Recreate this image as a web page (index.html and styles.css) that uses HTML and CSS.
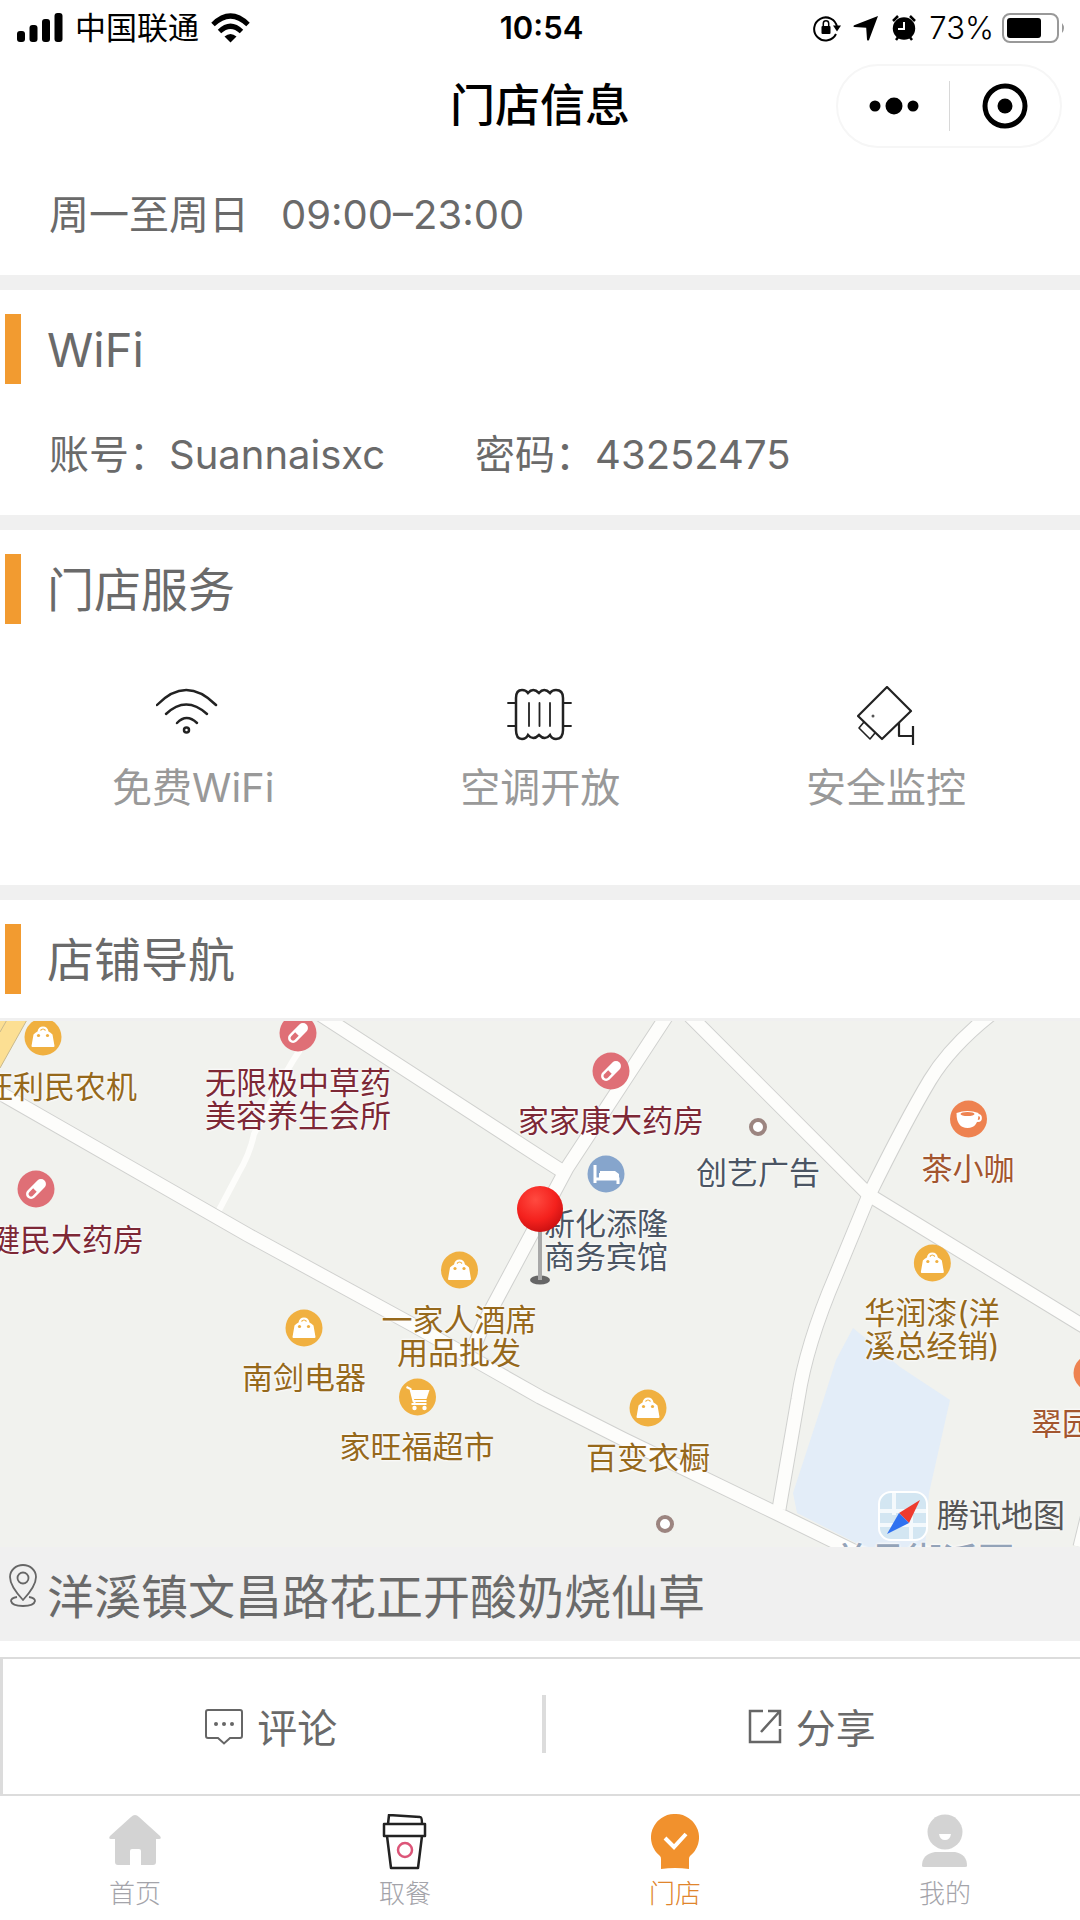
FILE: index.html
```
<!DOCTYPE html>
<html lang="zh-CN">
<head>
    <title>门店信息</title>
    <meta charset="UTF-8">
    <meta name="viewport" content="width=device-width, initial-scale=1.0">
    <link rel="stylesheet" href="styles.css">
</head>
<body>
    <!-- shared symbols -->
    <svg class="symbols" aria-hidden="true">
        <symbol id="bag" viewBox="0 0 38 38">
            <circle cx="19" cy="19" r="18.500" fill="#f0b040"/>
            <path d="M9.500 16.500q2-2 4-3 1-5 5.500-5t5.500 5q2 1 4 3l2 11.500q0 1-1 1h-21q-1 0-1-1z" fill="#fff"/>
            <circle cx="14.500" cy="17.500" r="1.600" fill="#f0b040"/>
            <circle cx="23.500" cy="17.500" r="1.600" fill="#f0b040"/>
            <path d="M16.500 12.500q2.500-3 5 0" fill="none" stroke="#f0b040" stroke-width="1.200"/>
        </symbol>
        <symbol id="pill" viewBox="0 0 38 38">
            <circle cx="19" cy="19" r="18.500" fill="#df6f76"/>
            <g transform="rotate(45 19 19)">
                <rect x="14" y="7" width="10" height="24" rx="5" fill="#fff"/>
                <path d="M16.500 20.500h5V26a2.500 2.500 0 0 1-5 0z" fill="#df6f76"/>
            </g>
        </symbol>
        <symbol id="cup" viewBox="0 0 38 38">
            <circle cx="19" cy="19" r="18.500" fill="#ee8250"/>
            <path d="M7 13q11-4 22 0 0 15-11 15T7 13z" fill="#fff"/>
            <circle cx="28.500" cy="18" r="3" fill="none" stroke="#fff" stroke-width="1.800"/>
            <ellipse cx="18" cy="14" rx="7" ry="2" fill="#ee8250"/>
        </symbol>
        <symbol id="bed" viewBox="0 0 38 38">
            <circle cx="19" cy="19" r="18.500" fill="#86a5cc"/>
            <path d="M8 10v18M8 24h23v5" fill="none" stroke="#fff" stroke-width="3"/>
            <path d="M12 18h1v-2h15l4 3v5H12z" fill="#fff"/>
        </symbol>
        <symbol id="cart" viewBox="0 0 38 38">
            <circle cx="19" cy="19" r="18.500" fill="#f0b040"/>
            <path d="M8 9l4 2 3 12h13M13 26h15M16 23v3" fill="none" stroke="#fff" stroke-width="2"/>
            <path d="M12 12h19l-3 9H15z" fill="#fff"/>
            <circle cx="16" cy="30" r="2.200" fill="#fff"/>
            <circle cx="26" cy="30" r="2.200" fill="#fff"/>
        </symbol>
    </svg>

    <div class="status-bar">
        <div class="status-left">
            <svg width="46" height="29" viewBox="0 0 46 29"><rect x="0" y="18" width="8" height="11" rx="3"/><rect x="12.500" y="12" width="8" height="17" rx="3"/><rect x="25" y="6" width="8" height="23" rx="3"/><rect x="37.500" y="0" width="8" height="29" rx="3"/></svg>
            <span>中国联通</span>
            <svg width="39" height="30" viewBox="0 0 39 30" fill="none" stroke="#000" stroke-width="5"><path d="M2 11.500Q19.500-5.500 37 11.500"/><path d="M8.500 18.500Q19.500 8 30.500 18.500"/><path d="M19.500 29.500l-6-6q6-5 12 0z" fill="#000" stroke="none"/></svg>
        </div>
        <div class="status-time">10:54</div>
        <div class="status-right">
            <svg width="28" height="28" viewBox="0 0 28 28"><path d="M23 20a11.500 11.500 0 1 1 1-7" fill="none" stroke="#000" stroke-width="2"/><path d="M20 11.500h8l-4 6z"/><rect x="8.500" y="12" width="9" height="8" rx="1"/><path d="M10.300 12V9.500a2.700 2.700 0 0 1 5.400 0V12" fill="none" stroke="#000" stroke-width="1.500"/></svg>
            <svg width="26" height="26" viewBox="0 0 26 26"><path d="M25 1L16 25q-1.500 1.500-2-.5l-.8-11.700L1.500 12q-2-.5-.3-1.800z"/></svg>
            <svg width="26" height="26" viewBox="0 0 26 26"><circle cx="13" cy="13.500" r="11.200"/><path d="M2 6l5-5M24 6l-5-5M5 25l3-4M21 25l-3-4" stroke="#000" stroke-width="2.500"/><path d="M13 7v7H7" fill="none" stroke="#fff" stroke-width="2"/></svg>
            <span>73%</span>
            <svg width="64" height="30" viewBox="0 0 64 30"><rect x="1" y="1" width="55" height="28" rx="7" fill="none" stroke="#999" stroke-width="2"/><rect x="5" y="5" width="34" height="20" rx="3"/><path d="M60 10q4 5 0 10z" fill="#999"/></svg>
        </div>
    </div>

    <header class="nav-bar">
        <h1>门店信息</h1>
        <div class="capsule">
            <button type="button" aria-label="更多"><svg width="50" height="20" viewBox="0 0 50 20"><circle cx="6" cy="10" r="5.500"/><circle cx="25" cy="10" r="8.500"/><circle cx="44" cy="10" r="5.500"/></svg></button>
            <button type="button" aria-label="关闭"><svg width="46" height="46" viewBox="0 0 46 46"><circle cx="23" cy="23" r="20" fill="none" stroke="#000" stroke-width="5"/><circle cx="23" cy="23" r="7.500"/></svg></button>
        </div>
    </header>

    <main>
        <section class="section">
            <div class="info-row hours-row">
                <span>周一至周日</span>
                <span>09:00–23:00</span>
            </div>
        </section>

        <section class="section">
            <h2>WiFi</h2>
            <div class="info-row wifi-row">
                <span>账号：Suannaisxc</span>
                <span>密码：43252475</span>
            </div>
        </section>

        <section class="section">
            <h2>门店服务</h2>
            <div class="services">
                <div class="service">
                    <svg width="74" height="60" viewBox="0 0 74 60" fill="none" stroke="#222" stroke-width="2.500" stroke-linecap="round"><path d="M1 19Q30-11 60 19"/><path d="M10 28Q30 9 51 28"/><path d="M21 37Q30.500 27 41 37"/><circle cx="30.500" cy="44" r="2.500"/></svg>
                    <span>免费WiFi</span>
                </div>
                <div class="service">
                    <svg width="66" height="60" viewBox="0 0 66 60" fill="none" stroke="#222" stroke-width="2.500" stroke-linecap="round"><path d="M9 12q0-8 6-8 4 0 6 3 5-6 11 0 5-6 11 0 2-3 6-3 7 0 7 8v32q0 9-7 9-4 0-6-4-5 6-11 0-6 6-11 0-2 4-6 4-6 0-6-9z"/><path d="M1 17h8M1 40h8M56 17h8M56 40h8M22 17v23M32.500 17v23M43 17v23" stroke-width="1.800"/></svg>
                    <span>空调开放</span>
                </div>
                <div class="service">
                    <svg width="58" height="60" viewBox="0 0 58 60" fill="none" stroke="#222" stroke-width="2.200" stroke-linejoin="round"><path d="M30 1L54 25 25 53 1 30z"/><path d="M7 36l-5 6 11 11 5-6" stroke-width="1.600"/><path d="M42 37v13h14M56 40v19"/><circle cx="16" cy="30" r="1.500" fill="#555" stroke="none"/></svg>
                    <span>安全监控</span>
                </div>
            </div>
        </section>

        <section class="section nav-section">
            <h2>店铺导航</h2>
            <div class="map">
                <svg class="map-base" width="1080" height="529" viewBox="0 0 1080 529">
                    <defs>
                        <g id="roads" fill="none" stroke-linejoin="round">
                            <path d="M0 75l248 142 165 90 127 72 83 42 155 75 90 44"/>
                            <path d="M318-5l222 144 22 14"/>
                            <path d="M666-1L567 150 485 303l-12 28"/>
                            <path d="M690-2l179 179 211 129 10 6"/>
                            <path d="M990-3q-40 32-60 65-24 40-61 115l-33 80q-30 70-38 124l-19 110"/>
                            <path d="M1092 480l-12 49"/>
                        </g>
                    </defs>
                    <path d="M853 310l-17 32-12 38-31 95 4 20 67 34h61l4-54 21-93-50-33z" fill="#e3edf8"/>
                    <path d="M0 0h28L0 50z" fill="#fcdf93"/>
                    <path d="M28 0L0 50M8 0L0 14" stroke="#c9b98c" fill="none"/>
                    <path d="M300 32q-14 20-28 50l-18 34q-4 20-16 40l-20 38" fill="none" stroke="#fdfdfb" stroke-width="6"/>
                    <use href="#roads" stroke="#d0d1cf" stroke-width="15"/>
                    <use href="#roads" stroke="#fdfdfb" stroke-width="13"/>
                </svg>

                <div class="poi shop p-nongji"><svg><use href="#bag"/></svg></div>
                <div class="poi-text shop p-nongji-text">旺利民农机</div>
                <div class="poi drug p-wuxianji"><svg><use href="#pill"/></svg><span>无限极中草药<br>美容养生会所</span></div>
                <div class="poi drug p-jiajiakang"><svg><use href="#pill"/></svg><span>家家康大药房</span></div>
                <div class="poi place p-chuangyi"><i class="dot"></i><span>创艺广告</span></div>
                <div class="poi food p-cha"><svg><use href="#cup"/></svg><span>茶小咖</span></div>
                <div class="poi drug p-jianmin"><svg><use href="#pill"/></svg></div>
                <div class="poi-text drug p-jianmin-text">健民大药房</div>
                <div class="poi place p-hotel"><svg><use href="#bed"/></svg><span>新化添隆<br>商务宾馆</span></div>
                <div class="poi shop p-paint"><svg><use href="#bag"/></svg><span>华润漆(洋<br>溪总经销)</span></div>
                <div class="poi shop p-jiuxi"><svg><use href="#bag"/></svg><span>一家人酒席<br>用品批发</span></div>
                <div class="poi shop p-dianqi"><svg><use href="#bag"/></svg><span>南剑电器</span></div>
                <div class="poi shop p-chaoshi"><svg><use href="#cart"/></svg><span>家旺福超市</span></div>
                <div class="poi shop p-yichu"><svg><use href="#bag"/></svg><span>百变衣橱</span></div>
                <div class="poi place p-small"><i class="dot"></i></div>
                <div class="poi food p-cuiyuan"><svg><use href="#cup"/></svg></div>
                <div class="poi-text food p-cuiyuan-text">翠园</div>
                <div class="district">普昌街派页</div>

                <svg class="pin" width="48" height="102" viewBox="0 0 48 102">
                    <defs><radialGradient id="ball" cx="40%" cy="30%" r="75%"><stop offset="0" stop-color="#ff4a40"/><stop offset=".6" stop-color="#f4211d"/><stop offset="1" stop-color="#c80f10"/></radialGradient></defs>
                    <ellipse cx="24" cy="95" rx="10" ry="4.500" fill="#666"/>
                    <rect x="22" y="44" width="4" height="51" fill="#a8a8a8"/>
                    <circle cx="24" cy="24" r="23" fill="url(#ball)"/>
                </svg>

                <div class="map-brand">
                    <svg width="50" height="50" viewBox="0 0 50 50">
                        <rect x="1" y="1" width="48" height="48" rx="12" fill="#d3e6f2" stroke="#fff" stroke-width="2"/>
                        <path d="M16 2v22M2 20h46M33 20v28M2 34h46" stroke="#f4f9fc" stroke-width="4"/>
                        <path d="M42 9L21 22l10 10z" fill="#ee3b2f"/>
                        <path d="M9 43l12-21 10 10z" fill="#2f71f0"/>
                    </svg>
                    <span>腾讯地图</span>
                </div>
            </div>
            <div class="address">
                <svg width="28" height="43" viewBox="0 0 28 43" fill="none" stroke="#666" stroke-width="1.800"><path d="M14 36Q1 22 1 13a13 12 0 0 1 26 0q0 9-13 23z"/><circle cx="14" cy="14" r="5.500"/><path d="M8 33q-6 1-6 4 1 5 12 5t12-5q0-3-6-4"/></svg>
                <span>洋溪镇文昌路花正开酸奶烧仙草</span>
            </div>
        </section>
    </main>

    <div class="actions">
        <button type="button">
            <svg width="38" height="36" viewBox="0 0 38 36" fill="none" stroke="#666" stroke-width="2"><path d="M3 1h32q2 0 2 2v24q0 2-2 2H25l-6 5.500L13 29H3q-2 0-2-2V3q0-2 2-2z"/><g fill="#666" stroke="none"><circle cx="11" cy="15" r="2"/><circle cx="19" cy="15" r="2"/><circle cx="27" cy="15" r="2"/></g></svg>
            <span>评论</span>
        </button>
        <button type="button">
            <svg width="34" height="36" viewBox="0 0 34 36" fill="none" stroke="#666" stroke-width="2.500"><path d="M15 2H2v31h30V20M20 2h12v15M32 2L13 23"/></svg>
            <span>分享</span>
        </button>
    </div>

    <nav class="tab-bar">
        <a href="#">
            <svg width="54" height="56" viewBox="0 0 54 56" fill="#d3d3d3"><path d="M27 1q2 0 4 2l21 19q2 3-1 3h-3v23q0 3-3 3H33V37q0-2-2-2h-7q-2 0-2 2v14H10q-3 0-3-3V25H3q-3 0-1-3L23 3q2-2 4-2z"/></svg>
            <span>首页</span>
        </a>
        <a href="#">
            <svg width="46" height="56" viewBox="0 0 46 56" fill="none" stroke="#222" stroke-width="2.500" stroke-linejoin="round"><path d="M6 10l1-9 31 2q2 0 2 7M2 10h41v12H2zM5 22l4 32h27l4-32"/><circle cx="23" cy="36" r="7" stroke="#dc5578"/></svg>
            <span>取餐</span>
        </a>
        <a href="#" class="active">
            <svg width="48" height="56" viewBox="0 0 48 56"><path d="M24 0a23.500 23.500 0 0 1 15 42q-1 1-1 3v10q-14-2-28 0V45q0-2-1-3A23.500 23.500 0 0 1 24 0z" fill="#f1912d"/><path d="M14 24l9 9 12-13" fill="none" stroke="#fff" stroke-width="4"/></svg>
            <span>门店</span>
        </a>
        <a href="#">
            <svg width="48" height="56" viewBox="0 0 48 56" fill="#d3d3d3"><circle cx="24" cy="18" r="17.500"/><path d="M14 38h20q12 2 12 14 0 1-2 1H3q-2 0-2-1 0-12 13-14z"/><path d="M18 20h12q-1 6-6 6t-6-6z" fill="#fff"/></svg>
            <span>我的</span>
        </a>
    </nav>
</body>
</html>
```
FILE: styles.css
```
* {
    margin: 0;
    padding: 0;
    box-sizing: border-box;
}

body {
    font-family: Inter, "Noto Sans CJK SC", sans-serif;
    background: #fff;
    color: #6a6a6a;
    font-size: 40px;
    line-height: 60px;
}

svg {
    display: block;
    flex-shrink: 0;
}

button {
    background: none;
    border: none;
    font: inherit;
    color: inherit;
    cursor: pointer;
}

a {
    color: inherit;
    text-decoration: none;
}

.symbols {
    position: absolute;
    width: 0;
    height: 0;
}

/* status bar */
.status-bar {
    display: grid;
    grid-template-columns: 1fr auto 1fr;
    align-items: center;
    height: 55px;
    padding: 0 14px 0 17px;
    color: #000;
    font-size: 31px;
    line-height: 32px;
}

.status-left,
.status-right {
    display: flex;
    align-items: center;
    gap: 12px;
}

.status-right {
    justify-content: flex-end;
    font-weight: 300;
}

.status-right span {
    margin-right: -4px;
}

.status-time {
    font-weight: 600;
}

/* title bar */
.nav-bar {
    display: grid;
    grid-template-columns: 1fr auto 1fr;
    align-items: center;
    height: 102px;
    padding: 0 18px;
    color: #000;
}

.nav-bar h1 {
    grid-column: 2;
    font-size: 45px;
    font-weight: 500;
}

.capsule {
    display: flex;
    justify-self: end;
    width: 226px;
    height: 84px;
    border: 2px solid #f6f6f6;
    border-radius: 42px;
}

.capsule button {
    flex: 1;
    display: flex;
    align-items: center;
    justify-content: center;
}

.capsule button + button {
    position: relative;
}

.capsule button + button::before {
    content: '';
    position: absolute;
    left: 0;
    top: 15px;
    bottom: 15px;
    width: 1px;
    background: #d8d8d8;
}

/* sections */
.section {
    border-bottom: 15px solid #f0f0f0;
}

.section h2 {
    display: flex;
    align-items: center;
    height: 70px;
    margin: 24px 0 24px 5px;
    padding: 2px 0 0 26px;
    border-left: 16px solid #f29b30;
    font-size: 47px;
    font-weight: 400;
}

.info-row {
    display: flex;
    padding: 17px 49px 30px;
}

.hours-row {
    gap: 32px;
    padding-top: 28px;
}

.wifi-row {
    gap: 90px;
}

.services {
    display: flex;
    justify-content: space-between;
    padding: 38px 114px 67px 112px;
}

.service {
    display: flex;
    flex-direction: column;
    align-items: center;
    gap: 12px;
    color: #999;
}

/* map */
.nav-section {
    border-bottom: none;
}

.map {
    position: relative;
    height: 529px;
    overflow: hidden;
    background: #f1f2ee;
    border-top: 3px solid #f0f0f0;
}

.map-base {
    position: absolute;
    left: 0;
    top: -3px;
}

.poi,
.poi-text {
    position: absolute;
    font-size: 31px;
    line-height: 33px;
    text-align: center;
    white-space: nowrap;
    text-shadow: 0 0 3px #fff, 0 0 3px #fff;
}

.poi {
    display: flex;
    flex-direction: column;
    align-items: center;
    gap: 14px;
    height: 38px;
    transform: translateX(-50%);
}

.poi svg {
    width: 38px;
    height: 38px;
}

.dot {
    flex-shrink: 0;
    width: 18px;
    height: 18px;
    margin: 10px 0 6px;
    border: 4px solid #9c8580;
    border-radius: 50%;
    background: #fff;
}

.shop { color: #96691c; }
.drug { color: #7d2836; }
.food { color: #a3562f; }
.place { color: #4b5563; }

.p-nongji { left: 43px; top: -3px; }
.p-nongji-text { left: -18px; top: 49px; }
.p-wuxianji { left: 298px; top: -7px; }
.p-jiajiakang { left: 611px; top: 31px; }
.p-chuangyi { left: 758px; top: 87px; }
.p-cha { left: 968px; top: 79px; }
.p-jianmin { left: 36px; top: 149px; }
.p-jianmin-text { left: -11px; top: 202px; }
.p-hotel { left: 606px; top: 134px; }
.p-paint { left: 932px; top: 223px; }
.p-jiuxi { left: 459px; top: 230px; }
.p-dianqi { left: 304px; top: 288px; }
.p-chaoshi { left: 417px; top: 357px; }
.p-yichu { left: 648px; top: 368px; }
.p-small { left: 665px; top: 484px; }
.p-cuiyuan { left: 1092px; top: 333px; }
.p-cuiyuan-text { left: 1031px; top: 386px; }

.district {
    position: absolute;
    left: 834px;
    top: 518px;
    color: #93a3b8;
    font-size: 36px;
    line-height: 44px;
    font-weight: 500;
    white-space: nowrap;
    text-shadow: 0 0 3px #fff, 0 0 3px #fff;
}

.pin {
    position: absolute;
    left: 516px;
    top: 164px;
}

.map-brand {
    position: absolute;
    right: 15px;
    bottom: 6px;
    display: flex;
    align-items: center;
    gap: 9px;
    color: #555;
    font-size: 32px;
    line-height: 50px;
    text-shadow: 0 0 3px #fff;
}

.address {
    display: flex;
    align-items: center;
    gap: 10px;
    height: 94px;
    padding: 6px 10px 0 9px;
    background: #f0f0f0;
    font-size: 47px;
}

.address svg {
    margin-bottom: 24px;
}

/* comment / share */
.actions {
    position: relative;
    display: flex;
    gap: 4px;
    height: 139px;
    margin-top: 16px;
    border: 2px solid #dcdcdc;
    border-left-width: 3px;
    border-right: none;
}

.actions button {
    flex: 1;
    display: flex;
    align-items: center;
    justify-content: center;
    gap: 14px;
}

.actions span {
    padding-top: 4px;
}

.actions::after {
    content: '';
    position: absolute;
    left: 50%;
    top: 36px;
    width: 4px;
    height: 58px;
    background: #dcdcdc;
}

/* bottom tabs */
.tab-bar {
    display: flex;
    padding: 18px 0 10px;
}

.tab-bar a {
    flex: 1;
    display: flex;
    flex-direction: column;
    align-items: center;
    gap: 7px;
    color: #a4a4aa;
    font-size: 26px;
    font-weight: 300;
    line-height: 34px;
}

.tab-bar .active {
    color: #e0852c;
}
```
